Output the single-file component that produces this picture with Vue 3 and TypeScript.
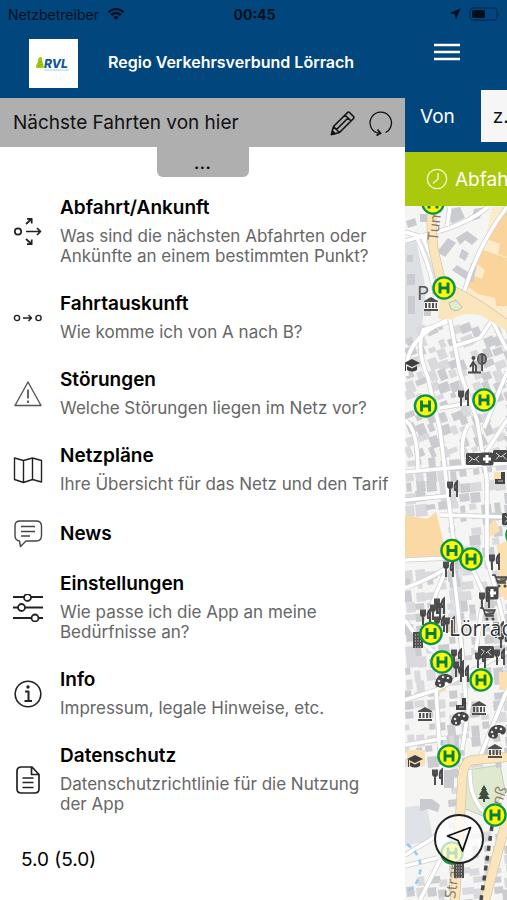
<script setup lang="ts">
import { ref } from 'vue'

type IconName = 'departures' | 'trip' | 'warning' | 'plan' | 'news' | 'settings' | 'info' | 'document'
interface MenuEntry { icon: IconName; title: string; text?: string }

const menu: MenuEntry[] = [
  { icon: 'departures', title: 'Abfahrt/Ankunft', text: 'Was sind die nächsten Abfahrten oder Ankünfte an einem bestimmten Punkt?' },
  { icon: 'trip', title: 'Fahrtauskunft', text: 'Wie komme ich von A nach B?' },
  { icon: 'warning', title: 'Störungen', text: 'Welche Störungen liegen im Netz vor?' },
  { icon: 'plan', title: 'Netzpläne', text: 'Ihre Übersicht für das Netz und den Tarif' },
  { icon: 'news', title: 'News' },
  { icon: 'settings', title: 'Einstellungen', text: 'Wie passe ich die App an meine Bedürfnisse an?' },
  { icon: 'info', title: 'Info', text: 'Impressum, legale Hinweise, etc.' },
  { icon: 'document', title: 'Datenschutz', text: 'Datenschutzrichtlinie für die Nutzung der\u00a0App' },
]

const origin = ref('')

interface Spot { x: number; y: number }
interface Poi extends Spot { kind: string }
interface Block extends Spot { w: number; h: number; a: number; tone: string }

const stops: Spot[] = [
  { x: 433, y: 203 }, { x: 444, y: 288 }, { x: 425.5, y: 406 }, { x: 484, y: 400 },
  { x: 452, y: 550.5 }, { x: 471, y: 559 }, { x: 431, y: 633.5 }, { x: 442, y: 662 },
  { x: 481, y: 680 }, { x: 449, y: 756 }, { x: 495, y: 815 }, { x: 452, y: 853 }, { x: 517, y: 535 },
]

const pois: Poi[] = [
  { kind: 'museum', x: 431, y: 304 }, { kind: 'cap', x: 412, y: 365 }, { kind: 'grove', x: 477, y: 363 },
  { kind: 'fork', x: 464, y: 398 }, { kind: 'mail', x: 474, y: 459 }, { kind: 'plus', x: 487, y: 459 },
  { kind: 'mail', x: 501, y: 456 }, { kind: 'tower', x: 501, y: 478 }, { kind: 'fork', x: 453, y: 489 },
  { kind: 'mail', x: 510, y: 519 }, { kind: 'fork', x: 449, y: 569 }, { kind: 'fork', x: 495, y: 562 },
  { kind: 'cart', x: 500, y: 580 }, { kind: 'plus', x: 492, y: 593 }, { kind: 'fork', x: 485, y: 600 },
  { kind: 'cart', x: 488, y: 613 }, { kind: 'fork', x: 440, y: 606 }, { kind: 'fork', x: 436, y: 612 },
  { kind: 'fork', x: 426, y: 617 }, { kind: 'fork', x: 450, y: 625 }, { kind: 'fork', x: 440, y: 624 },
  { kind: 'fork', x: 499, y: 630 }, { kind: 'fork', x: 504, y: 640 },
  { kind: 'house', x: 418, y: 640 }, { kind: 'mail', x: 486, y: 652 }, { kind: 'fork', x: 481, y: 660 },
  { kind: 'fork', x: 457, y: 657 }, { kind: 'fork', x: 500, y: 657 }, { kind: 'fork', x: 459, y: 669 },
  { kind: 'fork', x: 464, y: 674 }, { kind: 'palette', x: 444, y: 681 }, { kind: 'museum', x: 425, y: 714 },
  { kind: 'tower', x: 462, y: 704 }, { kind: 'museum', x: 479, y: 708 }, { kind: 'palette', x: 460, y: 719 },
  { kind: 'palette', x: 497, y: 732 }, { kind: 'museum', x: 495, y: 751 }, { kind: 'cap', x: 415, y: 761 },
  { kind: 'fork', x: 438, y: 777 }, { kind: 'tree', x: 484, y: 794 }, { kind: 'house', x: 459, y: 870 },
]

/* Deterministic scatter of small houses between the streets */
function buildBlocks(): Block[] {
  const out: Block[] = []
  let seed = 41
  const next = (): number => {
    seed = (seed * 1103515245 + 12345) % 2147483648
    return seed / 2147483648
  }
  for (let y = 326; y < 900; y += 11) {
    for (let x = 403; x < 512; x += 11) {
      const r = next()
      const w = 5 + Math.round(next() * 7)
      const h = 5 + Math.round(next() * 7)
      const jx = Math.round(next() * 4)
      const jy = Math.round(next() * 4)
      const open = (y > 504 && y < 566 && x < 446) || (y > 762 && x < 440 && y < 870) || (y > 762 && y < 822 && x > 456)
      if (r < 0.14 || open) continue
      out.push({ x: x + jx, y: y + jy, w, h, a: y < 450 ? -22 : -6, tone: r > 0.6 ? '#cbccd0' : '#dadade' })
    }
  }
  return out
}
const blocks = buildBlocks()

const lanes: string[] = [
  'M405 241 L440 231 Q470 222 488 207', 'M405 232 L432 240', 'M450 207 L447 226', 'M507 207 Q478 245 464 292',
  'M417 238 Q432 270 436 300', 'M421 234 Q432 256 438 280', 'M447 322 L423 330 Q416 350 428 378 L440 430 L456 560',
  'M450 320 L460 372 L477 420 L487 480 L487 560', 'M407 376 Q402 340 447 320', 'M455 346 L480 338 L492 320',
  'M492 320 L507 350', 'M440 408 L469 403', 'M405 420 Q418 428 418 472', 'M405 472 L507 463', 'M468 425 Q459 440 464 468',
  'M405 500 L447 496', 'M440 515 L507 517', 'M507 372 L484 428', 'M507 420 L486 452', 'M405 560 L452 558 Q436 590 425 625',
  'M452 560 Q460 620 466 702', 'M471 565 L484 594 L476 650', 'M405 620 Q428 655 452 660', 'M405 700 L436 690 L440 752',
  'M436 690 L507 652', 'M487 560 Q500 600 507 640', 'M470 700 L462 750', 'M507 690 L480 757', 'M405 745 L446 738',
  'M405 855 L430 840 L440 833', 'M405 866 L437 858', 'M470 770 Q468 812 507 826', 'M440 860 L420 900', 'M405 588 Q440 575 452 563',
]
const mainRoads = 'M432 206 Q430 240 437 264 L447 310 M446 288 Q468 296 507 325 M507 757 L474 760 Q462 760 462 785 L455 900 M507 818 L485 900'
</script>

<template>
  <div class="screen">
    <div class="status">
      <span class="carrier">
        Netzbetreiber
        <svg width="18" height="14" viewBox="0 0 18 14" aria-hidden="true">
          <path d="M1.500 5.200 Q9 -1.500 16.500 5.200 M4.300 8 Q9 4 13.700 8" fill="none" stroke="#02101e" stroke-width="2.300" />
          <path d="M6.300 10.200 Q9 8 11.700 10.200 L9 13 Z" fill="#02101e" />
        </svg>
      </span>
      <strong>00:45</strong>
      <span class="indicators">
        <svg width="12" height="12" viewBox="0 0 12 12" aria-hidden="true"><path d="M11.500 .5 L7 11.500 L5.800 6.200 L.5 5 Z" fill="#02101e" /></svg>
        <svg width="32" height="14" viewBox="0 0 32 14" aria-hidden="true">
          <rect x="1" y="1" width="27" height="12" rx="3.500" fill="none" stroke="#063157" stroke-width="1.300" />
          <rect x="3" y="3" width="13" height="8" rx="1.500" fill="#02101e" />
          <path d="M29.500 5 Q31.500 7 29.500 9 Z" fill="#063157" />
        </svg>
      </span>
    </div>

    <div class="columns">
      <aside class="drawer">
        <header class="brand">
          <svg class="logo" viewBox="0 0 49 49" role="img" aria-label="RVL">
            <rect width="49" height="49" fill="#fff" />
            <path d="M7 29 Q7 25 9 23 Q8 20 11 18 Q14 18 13 21 L15 28 L14 29 Z" fill="#a9c90f" />
            <path d="M9 24 L13 22 M9 27 L14 25" stroke="#6d9a35" stroke-width=".7" />
            <text x="15" y="29" class="logo-text">RVL</text>
            <path d="M15 31 H40" stroke="#a8cfe8" stroke-width="1" />
          </svg>
          <h1>Regio Verkehrsverbund Lörrach</h1>
        </header>

        <section class="next">
          <h2>Nächste Fahrten von hier</h2>
          <button type="button" aria-label="Bearbeiten">
            <svg width="26" height="26" viewBox="0 0 26 26" fill="none" stroke="#111" stroke-width="1.600" stroke-linejoin="round">
              <path d="M1.500 24.500 L3.500 16.500 L17.500 2.500 Q18.500 1.500 19.500 2.500 L23.500 6.500 Q24.500 7.500 23.500 8.500 L9.500 22.500 Z M3.500 16.500 L9.500 22.500 M15 5 L21 11 M6.500 19.500 L18 8" />
              <path d="M1.500 24.500 L2.400 21 L5 23.600 Z" fill="#111" />
            </svg>
          </button>
          <button type="button" aria-label="Aktualisieren">
            <svg width="26" height="26" viewBox="0 0 26 26" fill="none" stroke="#111" stroke-width="1.300">
              <path d="M17.500 22.500 A10.700 10.700 0 1 0 8.500 22.700 L12 23.300" />
              <path d="M9.500 19.500 L12.500 23.300 L8.500 25.500" stroke-width="1.700" />
            </svg>
          </button>
        </section>
        <button type="button" class="handle">...</button>

        <nav>
          <a v-for="entry in menu" :key="entry.icon" href="#" class="entry">
            <svg width="30" height="28" viewBox="0 0 30 28" fill="none" stroke="#222" stroke-width="1.400" stroke-linejoin="round" aria-hidden="true">
              <g v-if="entry.icon === 'departures'">
                <circle cx="5" cy="13.500" r="3.200" stroke-width="1.700" />
                <path d="M13 13.500 H27.500 M24 10 L27.500 13.500 L24 17 M13 6 L18.500 1 M14 .8 H18.700 V5.500 M13 21 L18.500 26 M14 26.200 H18.700 V21.500" stroke-width="1.700" />
              </g>
              <g v-else-if="entry.icon === 'trip'">
                <circle cx="4" cy="14" r="2.600" /><circle cx="25.500" cy="14" r="2.600" />
                <path d="M10 14 H18.500 M15.500 11 L18.500 14 L15.500 17" stroke-width="1.500" />
              </g>
              <g v-else-if="entry.icon === 'warning'" stroke="#555">
                <path d="M15 2 L28 25.500 H2 Z" /><path d="M15 9.500 V18.500 M15 20.500 V23" stroke-width="1.800" />
              </g>
              <path v-else-if="entry.icon === 'plan'" d="M1.500 2 L10.500 4.500 L19.500 2 L28.500 4.500 V26 L19.500 23.500 L10.500 26.500 L1.500 23.500 Z M10.500 4.500 V26.500 M19.500 2 V23.500" />
              <g v-else-if="entry.icon === 'news'" stroke="#444">
                <path d="M7 1 H23 Q28.500 1 28.500 6 V15.500 Q28.500 21 23 21 H13 L7.500 26.500 L6.500 21 Q2 20.500 2 15.500 V6 Q2 1 7 1 Z" />
                <path d="M8 6.500 H22 M8 11.500 H22 M8 16 H17" stroke-width="1.600" />
              </g>
              <g v-else-if="entry.icon === 'settings'" stroke-width="2">
                <path d="M0 3 H30 M0 13.500 H30 M0 24 H30" />
                <g fill="#fff" stroke-width="1.800"><circle cx="14.500" cy="3.500" r="3.500" /><circle cx="8.500" cy="13.500" r="3.500" /><circle cx="22" cy="24" r="3.500" /></g>
              </g>
              <g v-else-if="entry.icon === 'info'">
                <circle cx="15" cy="14" r="12.800" stroke-width="1.600" />
                <path d="M12 11.500 H15.500 V21 M11.500 21 H19" stroke-width="2" /><circle cx="15" cy="7" r="1" fill="#222" />
              </g>
              <g v-else stroke-width="1.700">
                <path d="M19 1 H8.500 Q4 1 4 5 V23 Q4 27 8.500 27 H21.500 Q26 27 26 23 V8.500 Z M18.500 1.500 V8.500 H25.500" />
                <path d="M9.500 12 H20.500 M9.500 16.500 H20.500 M9.500 21.500 H20.500" />
              </g>
            </svg>
            <span class="copy">
              <strong>{{ entry.title }}</strong>
              <span v-if="entry.text">{{ entry.text }}</span>
            </span>
          </a>
        </nav>
        <p class="version">5.0 (5.0)</p>
      </aside>

      <main>
        <div class="topbar">
          <button type="button" aria-label="Menü">
            <svg width="26" height="18" viewBox="0 0 26 18" aria-hidden="true"><path d="M0 2 H26 M0 9 H26 M0 16 H26" stroke="#fff" stroke-width="2.600" /></svg>
          </button>
        </div>
        <div class="from">
          <label for="origin">Von</label>
          <input id="origin" v-model="origin" type="text" placeholder="z.B.">
        </div>
        <button type="button" class="departure">
          <svg width="22" height="22" viewBox="0 0 22 22" fill="none" stroke="#f4f9d5" stroke-width="1.300" aria-hidden="true">
            <circle cx="11" cy="11" r="9.700" /><path d="M12 5 V11 L7 15.500" />
          </svg>
          <span>Abfahrt</span>
        </button>
        <div class="map">
          <svg class="canvas" viewBox="405 206 102 694" preserveAspectRatio="xMinYMin slice" aria-hidden="true">
            <defs>
              <g id="poi-fork"><path d="M-5 -7.500 V-3 Q-5 -1 -3 -1 V8 M-3 -7.500 V-1 Q-1 -1 -1 -3 V-7.500 M4 8 V-7.500 Q1 -5 2 1 H4" stroke="#484848" stroke-width="1.900" fill="none" /></g>
              <g id="poi-mail"><rect x="-8" y="-6" width="16" height="12" rx="1.500" fill="#484848" /><path d="M-5 -3 L0 1 L5 -3 M-5 3.500 L-2 0 M5 3.500 L2 0" stroke="#ddd" fill="none" /></g>
              <g id="poi-plus"><rect x="-6.500" y="-6.500" width="13" height="13" rx="2" fill="#484848" /><path d="M-4 0 H4 M0 -4 V4" stroke="#fff" stroke-width="3" /></g>
              <g id="poi-museum"><path d="M-7 -3 L0 -7 L7 -3 V-2 H-7 Z M-6 -1 H-4 V4 H-6 Z M-2.500 -1 H-.5 V4 H-2.500 Z M1 -1 H3 V4 H1 Z M4.500 -1 H6 V4 H4.500 Z M-7 5 H7 V7 H-7 Z" fill="#505050" /></g>
              <g id="poi-cap"><path d="M-8 -2 L0 -6 L8 -2 L0 2 Z M-5 1 L0 3.500 L5 1 V5 Q0 8 -5 5 Z M-7 -1 V6 H-6 V-1 Z" fill="#3f3f3f" /></g>
              <g id="poi-cart"><path d="M-8 -5 H-5 L-2 3 H6 M-4 -3 H7 L5 1 H-3 Z" stroke="#484848" stroke-width="1.500" fill="#777" /><circle cx="-1" cy="6" r="1.500" fill="#484848" /><circle cx="5" cy="6" r="1.500" fill="#484848" /></g>
              <g id="poi-house"><rect x="-5" y="-8" width="10" height="16" fill="#505050" /><path d="M-2.500 -6 V8 M0 -6 V8 M2.500 -6 V8" stroke="#999" stroke-dasharray="2 1" /></g>
              <g id="poi-palette"><path d="M-9 2 Q-7 -8 3 -7 Q11 -5 8 1 Q6 4 3 1 Q0 0 1 4 Q-1 8 -6 6 Q-9 5 -9 2 Z" fill="#454545" /><g fill="#ddd"><circle cx="-5" cy="0" r="1.300" /><circle cx="-1" cy="-4" r="1.300" /><circle cx="4" cy="-3" r="1.300" /><circle cx="-4" cy="4" r="1.200" /></g></g>
              <g id="poi-tree"><path d="M0 -9 L3 -4 H2 L5 1 H3 L6 5 H1 V8 H-1 V5 H-6 L-3 1 H-5 L-2 -4 H-3 Z" fill="#3f4d42" /></g>
              <g id="poi-grove"><path d="M-9 9.500 H4 M-4 9 V-1 L-7 4 M-4 -1 L-1 3 V9 M5 8 V-4" stroke="#484848" stroke-width="1.800" fill="none" /><circle cx="-3.500" cy="-5" r="2" fill="#484848" /><ellipse cx="5" cy="-4" rx="5" ry="6" fill="#555" /><path d="M3 -8 V0 M7 -7 V-1" stroke="#bbb" /></g>
              <g id="poi-tower"><path d="M-6 6 V1 H0 V-6 H4 V6 Z" fill="#454545" /><path d="M-3 3 H2" stroke="#bbb" /></g>
            </defs>
            <rect x="405" y="206" width="102" height="694" fill="#f5f5f4" />
            <path d="M405 242 L416 240 L426 290 L421 335 L405 345 Z" fill="#dde0e3" />
            <path d="M450 566 L462 570 L464 625 L450 640 Z M405 807 L427 805 L433 840 L405 846 Z" fill="#dfe2e7" />
            <path d="M467 770 L500 765 L505 790 L488 818 L463 808 Z" fill="#dfe9cf" stroke="#c3cfb8" />
            <path d="M492 207 H507 V322 L463 291 Q471 263 485 240 Z" fill="#fdeccb" />
            <path d="M503 207 H507 V257 L498 254 L500 244 L489 240 Z M483 250 L507 258 V306 L496 306 L495 298 L478 294 L467 286 L474 276 L482 279 L485 270 L477 264 Z" fill="#fad49a" />
            <g fill="#c9cbd0">
              <path d="M437 252 L448 238 L456 243 L445 257 Z M456 238 L467 231 L478 239 L472 245 L465 240 L460 245 Z M452 270 L457 265 L468 272 L472 262 L477 265 L473 282 L468 281 Z M462 249 l7 4 l-4 8 l-6 -4 Z M446 210 l14 -3 l5 11 l-13 6 Z M474 209 l12 -2 l-7 12 l-8 2 Z M420 214 h8 v8 h-8 Z M406 221 l9 -3 l2 7 l-9 3 Z" />
              <path d="M407 255 h6 v7 h-6 Z M407 274 h8 v11 h-8 Z M408 296 h7 v18 h-7 Z M424 310 h7 v6 h-7 Z" />
              <path d="M420 799 h12 l8 6 l-2 7 l-10 -3 l-8 2 Z M444 770 h10 v18 h-10 Z M447 735 h12 v20 h-12 Z" />
            </g>
            <rect v-for="(b, i) in blocks" :key="i" :x="b.x" :y="b.y" :width="b.w" :height="b.h" :fill="b.tone" :transform="`rotate(${b.a} ${b.x} ${b.y})`" />
            <path d="M405 515 L427 519 L436 512 L441 531 L446 556 L405 558 Z" fill="#fbd9a5" />
            <path d="M487 527 L495 519 L500 531 L490 537 Z M497 545 L507 541 V600 L499 594 Z M434 682 l10 -3 l2 12 l-10 3 Z M499 672 h8 v18 h-8 Z M494 472 h10 v12 h-10 Z M407 750 h18 v16 h-18 Z" fill="#fbe0b4" />
            <g fill="none" stroke="#cfcfd2" stroke-width="5"><path v-for="lane in lanes" :key="lane" :d="lane" /></g>
            <g fill="none" stroke="#fff" stroke-width="3.600"><path v-for="lane in lanes" :key="lane" :d="lane" /></g>
            <path :d="mainRoads" fill="none" stroke="#d8c8a8" stroke-width="10" />
            <path :d="mainRoads" fill="none" stroke="#fbe5bd" stroke-width="8.500" />
            <path d="M441 285 L450 287 L507 320 V331 L480 315 Q462 312 453 319 L438 319 Z" fill="#fbe5bd" />
            <path d="M449 303 L456 300 L462 307 Q457 313 451 309 Z" fill="#dfeccd" stroke="#bbbfae" />
            <path d="M492 826 L481 900" stroke="#4a4a4a" stroke-width="3.500" stroke-dasharray="5 5" />
            <path d="M407 844 Q425 858 419 876 Q416 888 405 892 M442 740 L440 772" fill="none" stroke="#94caec" stroke-width="2.500" stroke-dasharray="5 5" />
            <text class="street" transform="translate(438 241) rotate(-84)">Tum</text>
            <text class="street" transform="translate(455 899) rotate(-82)">Stran</text>
            <text class="street" transform="translate(501 806) rotate(-70)">nß</text>
            <text x="417" y="300" class="parking">P</text>
            <use v-for="(p, i) in pois" :key="i" :href="`#poi-${p.kind}`" :x="p.x" :y="p.y" />
            <text x="449" y="636" class="town">Lörrach</text>
            <g v-for="s in stops" :key="`${s.x}-${s.y}`" :transform="`translate(${s.x} ${s.y})`">
              <circle r="10.600" fill="#fbf60c" stroke="#0c9440" stroke-width="2.400" />
              <path d="M-4 -5.500 V5.500 M4 -5.500 V5.500 M-4 0 H4" stroke="#087f38" stroke-width="2.900" />
            </g>
          </svg>
          <button type="button" class="locate" aria-label="Mein Standort">
            <svg width="26" height="26" viewBox="0 0 26 26" aria-hidden="true"><path d="M24.500 1.500 L16.500 25 L12 14.500 L1.500 10 Z" fill="none" stroke="#111" stroke-width="1.800" stroke-linejoin="round" /></svg>
          </button>
        </div>
      </main>
    </div>
  </div>
</template>

<style>
body { margin: 0; background: #fff; }
</style>

<style scoped>
* { box-sizing: border-box; }
.screen { display: flex; flex-direction: column; min-height: 100vh; background: #01467d; font-family: Inter, "Liberation Sans", sans-serif; color: #000; overflow: hidden; }
button { border: 0; padding: 0; background: none; font: inherit; color: inherit; cursor: pointer; }
svg { display: block; flex: none; }
.status { display: grid; grid-template-columns: 1fr auto 1fr; align-items: center; height: 28px; padding: 0 6px 0 8px; font-size: 14px; color: #02101e; }
.carrier, .indicators { display: flex; align-items: center; gap: 8px; }
.indicators { justify-content: flex-end; }
.columns { flex: 1; display: grid; grid-template-columns: minmax(0, 1fr) max(102px, 20vw); }
.drawer { display: flex; flex-direction: column; background: #fff; }
.brand { display: flex; align-items: center; gap: 30px; height: 70px; padding-left: 29px; background: #01467d; color: #fff; }
.logo { width: 49px; height: 49px; }
.logo-text { font: italic 800 12px Inter, sans-serif; fill: #11579a; }
h1 { margin: 0; font-size: 16px; font-weight: 600; line-height: 20px; padding-bottom: 2px; white-space: nowrap; }
.next { display: flex; align-items: center; gap: 12px; height: 49px; padding: 0 11px 0 13px; background: #afafaf; }
h2 { flex: 1; margin: 0; font-size: 19px; font-weight: 400; color: #111; white-space: nowrap; }
.handle { align-self: center; width: 92px; height: 30px; border-radius: 0 0 6px 6px; background: #afafaf; font-size: 20px; line-height: 30px; }
nav { display: flex; flex-direction: column; gap: 24px; padding: 19px 12px 0 13px; }
.entry { display: flex; align-items: center; gap: 17px; min-height: 28px; color: #000; text-decoration: none; }
.copy { display: flex; flex-direction: column; gap: 6px; font-size: 17px; line-height: 20px; color: #666; }
.copy strong { font-size: 19px; font-weight: 600; line-height: 24px; color: #000; }
.copy span { padding-bottom: 2px; }
.version { margin: 32px 0 0 21px; font-size: 19px; line-height: 24px; }
main { display: flex; flex-direction: column; min-width: 0; color: #fff; }
.topbar { height: 62px; padding: 15px 0 0 29px; }
.from { display: flex; align-items: center; gap: 26px; height: 62px; padding: 0 0 10px 15px; font-size: 19px; }
.from input { flex: 1; min-width: 0; height: 52px; border: 0; border-radius: 0; padding: 0 0 0 12px; background: #f6f6f7; font: inherit; color: #111; }
.from input::placeholder { color: #111; opacity: 1; }
.departure { display: flex; align-items: center; gap: 7px; height: 54px; padding-left: 21px; background: #aac90c; font-size: 19px; overflow: hidden; white-space: nowrap; }
.map { position: relative; flex: 1; overflow: hidden; }
.canvas { position: absolute; inset: 0; width: 100%; height: 100%; }
.street { font: 15px "Open Sans", sans-serif; fill: #8b7b62; }
.parking { font: 20px "Open Sans", sans-serif; fill: #555; }
.town { font: 21px "Open Sans", sans-serif; fill: #333; stroke: #fff; stroke-width: 2px; paint-order: stroke; }
.locate { position: absolute; right: 23px; bottom: 36px; display: grid; place-items: center; width: 50px; height: 50px; border: 2px solid #222; border-radius: 50%; background: rgba(255, 255, 255, 0.72); }
</style>
